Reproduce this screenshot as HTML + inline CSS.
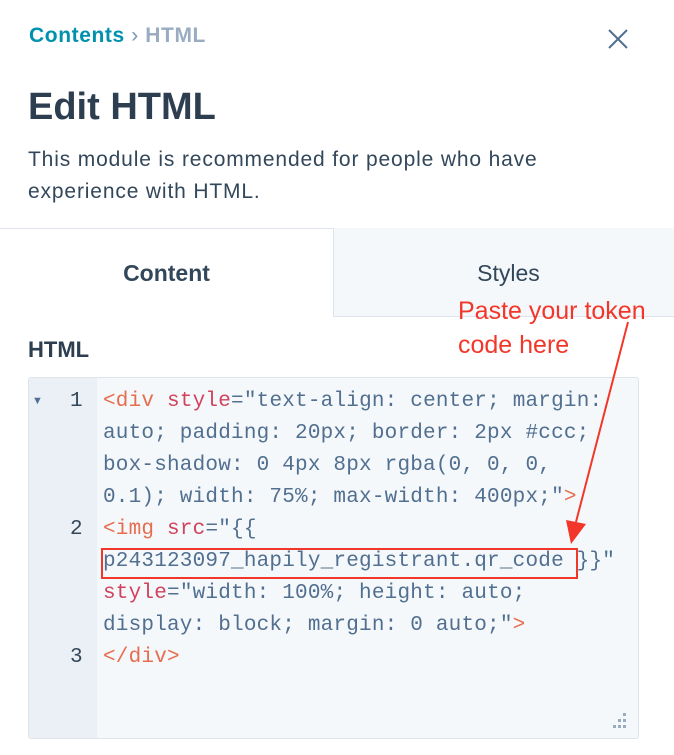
<!DOCTYPE html>
<html><head><style>
body{margin:0;width:674px;height:755px;background:#fff;position:relative;overflow:hidden;font-family:"Liberation Sans",sans-serif;color:#33475b}
.a{position:absolute}
.code{font-family:"Liberation Mono",monospace;font-size:21px;letter-spacing:0.2px;color:#516f90;line-height:32px;white-space:pre}
.t{color:#e66e50}.at{color:#d0435f}
</style></head><body>
<div class="a" style="left:29px;top:24px;font-size:21px;letter-spacing:0.6px;font-weight:bold;color:#0091ae">Contents <span style="color:#7c98b6;font-weight:normal">›</span> <span style="color:#99acc2">HTML</span></div>
<svg class="a" style="left:607px;top:28px" width="22" height="22"><path d="M2 2L20 20M20 2L2 20" stroke="#516f90" stroke-width="2"/></svg>
<div class="a" style="left:28px;top:86px;font-size:38px;font-weight:bold;color:#2d3e50">Edit HTML</div>
<div class="a" style="left:28px;top:144px;font-size:21px;letter-spacing:0.85px;line-height:32px;color:#33475b;width:560px">This module is recommended for people who have experience with HTML.</div>
<div class="a" style="left:0;top:228px;width:674px;height:1px;background:#dfe3eb"></div>
<div class="a" style="left:333px;top:228px;width:341px;height:88px;background:#f5f8fa;border-left:1px solid #dfe3eb;border-bottom:1px solid #dfe3eb"></div>
<div class="a" style="left:0;top:260px;width:333px;text-align:center;font-size:23px;font-weight:bold">Content</div>
<div class="a" style="left:338px;top:260px;width:341px;text-align:center;font-size:23px">Styles</div>
<div class="a" style="left:458px;top:294px;font-size:25px;line-height:34px;color:#f2372a">Paste your token<br>code here</div>
<div class="a" style="left:28px;top:337px;font-size:22px;font-weight:bold;color:#2d3e50">HTML</div>
<div class="a" style="left:28px;top:377px;width:609px;height:360px;background:#f5f8fa;border:1px solid #dfe3eb;border-radius:3px"></div>
<div class="a" style="left:29px;top:378px;width:68px;height:360px;background:#eaf0f6"></div>
<div class="a" style="left:32px;top:395px;font-size:11px;color:#516f90">▼</div>
<div class="a code" style="left:70px;top:386px;color:#33475b;text-align:right">1



2



3</div>
<div class="a code" style="left:103px;top:386px"><span class="t">&lt;div</span> <span class="at">style</span>="text-align: center; margin:
auto; padding: 20px; border: 2px #ccc;
box-shadow: 0 4px 8px rgba(0, 0, 0,
0.1); width: 75%; max-width: 400px;"<span class="t">&gt;</span>
<span class="t">&lt;img</span> <span class="at">src</span>="{{
p243123097_hapily_registrant.qr_code }}"
<span class="at">style</span>="width: 100%; height: auto;
display: block; margin: 0 auto;"<span class="t">&gt;</span>
<span class="t">&lt;/div&gt;</span></div>
<div class="a" style="left:101px;top:548px;width:473px;height:27px;border:2px solid #f2372a"></div>
<svg class="a" style="left:0;top:0" width="674" height="755"><line x1="628" y1="322" x2="576" y2="522" stroke="#f2372a" stroke-width="2"/><polygon points="566,520 586,524 571,544" fill="#f2372a"/>
<g fill="#99acc2"><rect x="623" y="713" width="3" height="3"/><rect x="618" y="719" width="3" height="3"/><rect x="623" y="719" width="3" height="3"/><rect x="613" y="725" width="3" height="3"/><rect x="618" y="725" width="3" height="3"/><rect x="623" y="725" width="3" height="3"/></g></svg>
</body></html>
